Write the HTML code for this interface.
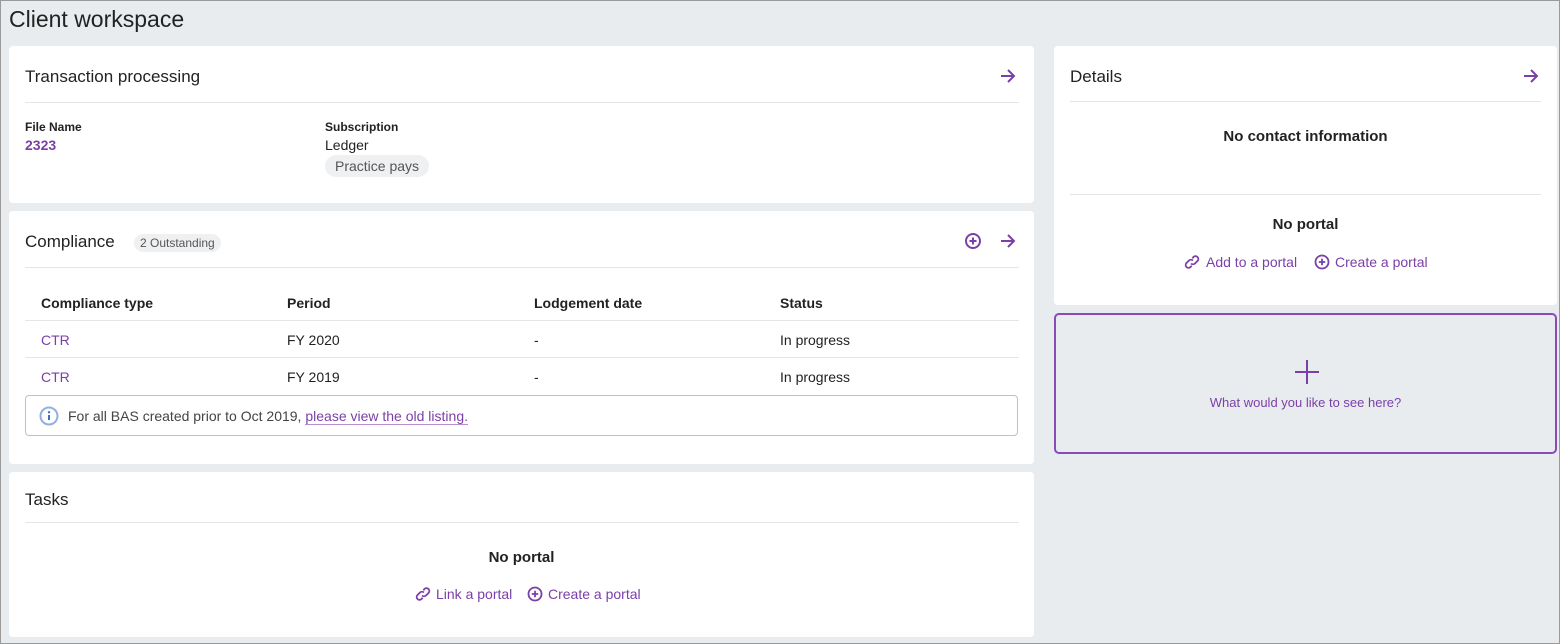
<!DOCTYPE html>
<html><head><style>
*{box-sizing:border-box;margin:0;padding:0}
body{width:1560px;height:644px;background:#e9ecef;font-family:"Liberation Sans",sans-serif;color:#222;position:relative;overflow:hidden}
.a{position:absolute}
.card{position:absolute;background:#fff;border-radius:4px}
.h{position:absolute;font-size:17px;color:#222}
.line{position:absolute;height:1px;background:#e3e5e8}
.p{color:#7b3fa8}
.t{position:absolute;font-size:14px}
svg{position:absolute}
</style></head><body>
<div class="a" style="left:0;top:0;width:1560px;height:644px;border:1px solid #9a9a9a;z-index:5;pointer-events:none"></div>
<div class="a" style="left:9px;top:6px;font-size:23px;color:#222">Client workspace</div>

<div class="card" style="left:9px;top:46px;width:1025px;height:157px">
 <div class="h" style="left:16px;top:21px">Transaction processing</div>
 <svg style="left:990px;top:21px" width="18" height="18" viewBox="0 0 18 18"><path d="M2 9h13M9 3l6 6-6 6" stroke="#7b3fa8" stroke-width="2" fill="none"/></svg>
 <div class="line" style="left:16px;top:56px;width:994px"></div>
 <div class="t" style="left:16px;top:74px;font-size:12px;font-weight:bold">File Name</div>
 <div class="t p" style="left:16px;top:91px;font-weight:bold">2323</div>
 <div class="t" style="left:316px;top:74px;font-size:12px;font-weight:bold">Subscription</div>
 <div class="t" style="left:316px;top:91px">Ledger</div>
 <div class="a" style="left:316px;top:109px;background:#eef0f2;border-radius:11px;padding:3px 10px;font-size:14px;color:#555">Practice pays</div>
</div>

<div class="card" style="left:9px;top:211px;width:1025px;height:253px">
 <div class="h" style="left:16px;top:21px">Compliance</div>
 <div class="a" style="left:125px;top:23px;background:#eef0f2;border-radius:10px;padding:2px 6px;font-size:12px;color:#555">2 Outstanding</div>
 <svg style="left:955px;top:21px" width="18" height="18" viewBox="0 0 18 18"><circle cx="9" cy="9" r="7" stroke="#7b3fa8" stroke-width="2" fill="none"/><path d="M9 5.5v7M5.5 9h7" stroke="#7b3fa8" stroke-width="2"/></svg>
 <svg style="left:990px;top:21px" width="18" height="18" viewBox="0 0 18 18"><path d="M2 9h13M9 3l6 6-6 6" stroke="#7b3fa8" stroke-width="2" fill="none"/></svg>
 <div class="line" style="left:16px;top:56px;width:994px"></div>
 <div class="t" style="left:32px;top:84px;font-weight:bold">Compliance type</div>
 <div class="t" style="left:278px;top:84px;font-weight:bold">Period</div>
 <div class="t" style="left:525px;top:84px;font-weight:bold">Lodgement date</div>
 <div class="t" style="left:771px;top:84px;font-weight:bold">Status</div>
 <div class="line" style="left:16px;top:109px;width:994px"></div>
 <div class="t p" style="left:32px;top:121px">CTR</div><div class="t" style="left:278px;top:121px">FY 2020</div><div class="t" style="left:525px;top:121px">-</div><div class="t" style="left:771px;top:121px">In progress</div>
 <div class="line" style="left:16px;top:146px;width:994px"></div>
 <div class="t p" style="left:32px;top:158px">CTR</div><div class="t" style="left:278px;top:158px">FY 2019</div><div class="t" style="left:525px;top:158px">-</div><div class="t" style="left:771px;top:158px">In progress</div>
 <div class="a" style="left:16px;top:184px;width:993px;height:41px;border:1px solid #b4c2d6;border-radius:4px"></div>
 <svg style="left:30px;top:195px" width="20" height="20" viewBox="0 0 20 20"><circle cx="10" cy="10" r="8.5" stroke="#8fb0e0" stroke-width="2" fill="none"/><path d="M10 9v5" stroke="#3d6fc4" stroke-width="2"/><circle cx="10" cy="6.3" r="1.2" fill="#3d6fc4"/></svg>
 <div class="t" style="left:59px;top:197px;color:#444">For all BAS created prior to Oct 2019, <span class="p" style="border-bottom:1px solid #b58fd0">please view the old listing.</span></div>
</div>

<div class="card" style="left:9px;top:472px;width:1025px;height:165px">
 <div class="h" style="left:16px;top:18px">Tasks</div>
 <div class="line" style="left:16px;top:50px;width:994px"></div>
 <div class="t" style="left:0;width:1025px;text-align:center;top:77px;font-size:15px;font-weight:bold">No portal</div>
 <svg style="left:406px;top:114px" width="16" height="16" viewBox="0 0 16 16"><path d="M7 9.5a3 3 0 0 0 4 0l2.5-2.5a2.8 2.8 0 0 0-4-4L8.3 4.2M9 6.5a3 3 0 0 0-4 0L2.5 9a2.8 2.8 0 0 0 4 4l1.2-1.2" stroke="#7b3fa8" stroke-width="1.8" fill="none"/></svg>
 <div class="t p" style="left:427px;top:114px">Link a portal</div>
 <svg style="left:518px;top:114px" width="16" height="16" viewBox="0 0 16 16"><circle cx="8" cy="8" r="6.5" stroke="#7b3fa8" stroke-width="1.8" fill="none"/><path d="M8 4.8v6.4M4.8 8h6.4" stroke="#7b3fa8" stroke-width="1.8"/></svg>
 <div class="t p" style="left:539px;top:114px">Create a portal</div>
</div>

<div class="card" style="left:1054px;top:46px;width:503px;height:259px">
 <div class="h" style="left:16px;top:21px">Details</div>
 <svg style="left:468px;top:21px" width="18" height="18" viewBox="0 0 18 18"><path d="M2 9h13M9 3l6 6-6 6" stroke="#7b3fa8" stroke-width="2" fill="none"/></svg>
 <div class="line" style="left:16px;top:55px;width:471px"></div>
 <div class="t" style="left:0;width:503px;text-align:center;top:82px;font-size:15px;font-weight:bold">No contact information</div>
 <div class="line" style="left:16px;top:148px;width:471px"></div>
 <div class="t" style="left:0;width:503px;text-align:center;top:170px;font-size:15px;font-weight:bold">No portal</div>
 <svg style="left:130px;top:208px" width="16" height="16" viewBox="0 0 16 16"><path d="M7 9.5a3 3 0 0 0 4 0l2.5-2.5a2.8 2.8 0 0 0-4-4L8.3 4.2M9 6.5a3 3 0 0 0-4 0L2.5 9a2.8 2.8 0 0 0 4 4l1.2-1.2" stroke="#7b3fa8" stroke-width="1.8" fill="none"/></svg>
 <div class="t p" style="left:152px;top:208px">Add to a portal</div>
 <svg style="left:260px;top:208px" width="16" height="16" viewBox="0 0 16 16"><circle cx="8" cy="8" r="6.5" stroke="#7b3fa8" stroke-width="1.8" fill="none"/><path d="M8 4.8v6.4M4.8 8h6.4" stroke="#7b3fa8" stroke-width="1.8"/></svg>
 <div class="t p" style="left:281px;top:208px">Create a portal</div>
</div>

<div class="a" style="left:1054px;top:313px;width:503px;height:141px;border:2px solid #8a4bb8;border-radius:5px">
 <svg style="left:238px;top:44px" width="26" height="26" viewBox="0 0 26 26"><path d="M13 1v24M1 13h24" stroke="#7b3fa8" stroke-width="2"/></svg>
 <div class="t p" style="left:0;width:499px;text-align:center;top:80px;font-size:13px">What would you like to see here?</div>
</div>
</body></html>
